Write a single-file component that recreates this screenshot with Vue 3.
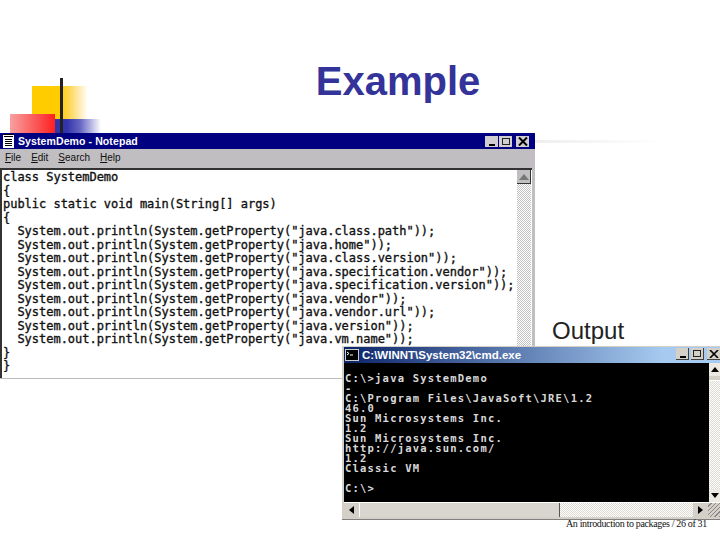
<script setup>
const notepadLines = [
  'class SystemDemo',
  '{',
  'public static void main(String[] args)',
  '{',
  '  System.out.println(System.getProperty("java.class.path"));',
  '  System.out.println(System.getProperty("java.home"));',
  '  System.out.println(System.getProperty("java.class.version"));',
  '  System.out.println(System.getProperty("java.specification.vendor"));',
  '  System.out.println(System.getProperty("java.specification.version"));',
  '  System.out.println(System.getProperty("java.vendor"));',
  '  System.out.println(System.getProperty("java.vendor.url"));',
  '  System.out.println(System.getProperty("java.version"));',
  '  System.out.println(System.getProperty("java.vm.name"));',
  '}',
  '}',
]
const cmdLines = [
  'C:\\>java SystemDemo',
  '-',
  'C:\\Program Files\\JavaSoft\\JRE\\1.2',
  '46.0',
  'Sun Microsystems Inc.',
  '1.2',
  'Sun Microsystems Inc.',
  'http://java.sun.com/',
  '1.2',
  'Classic VM',
  ' ',
  'C:\\>',
]
const menus = [
  { key: 'F', rest: 'ile' },
  { key: 'E', rest: 'dit' },
  { key: 'S', rest: 'earch' },
  { key: 'H', rest: 'elp' },
]
</script>

<template>
  <div class="slide">
    <div class="logo">
      <div class="logo-yellow"></div>
      <div class="logo-blue"></div>
      <div class="logo-red"></div>
      <div class="logo-bar"></div>
    </div>
    <h1 class="title">Example</h1>
    <div class="rule"></div>

    <section class="notepad">
      <header class="np-title">
        <svg class="np-icon" width="13" height="14" viewBox="0 0 13 14">
          <rect x="1" y="1" width="11" height="13" fill="#fff" />
          <path d="M2 0.5h9M2 2.5h9" stroke="#000" />
          <path d="M3 5.5h7M3 7.5h7M3 9.5h7M3 11.5h7" stroke="#000" />
        </svg>
        <span class="np-caption">SystemDemo - Notepad</span>
        <div class="ctrls">
          <button class="ctrl"><i class="g-min"></i></button>
          <button class="ctrl"><i class="g-max"></i></button>
          <button class="ctrl ctrl-close">
            <svg width="10" height="9" viewBox="0 0 10 9"><path d="M1 0.5l8 8M9 0.5l-8 8" stroke="#000" stroke-width="2" /></svg>
          </button>
        </div>
      </header>
      <nav class="np-menu">
        <span v-for="m in menus" :key="m.key"><u>{{ m.key }}</u>{{ m.rest }}</span>
      </nav>
      <div class="np-client">
        <pre class="np-text"><template v-for="(l, i) in notepadLines" :key="i">{{ l }}
</template></pre>
        <div class="np-scroll">
          <div class="np-up"><svg width="10" height="6" viewBox="0 0 10 6"><path d="M5 0l5 6H0z" fill="#777" /></svg></div>
        </div>
      </div>
    </section>

    <div class="output">Output</div>

    <section class="cmd">
      <header class="cmd-title">
        <svg class="cmd-icon" width="14" height="12" viewBox="0 0 14 12">
          <rect x="0.5" y="0.5" width="13" height="11" fill="#000" stroke="#ccc" />
          <path d="M2 3l2 1.5L2 6M5 6h3" stroke="#fff" fill="none" />
        </svg>
        <span class="cmd-caption">C:\WINNT\System32\cmd.exe</span>
        <div class="cmd-ctrls">
          <button class="xctrl"><i class="g-min"></i></button>
          <button class="xctrl"><i class="g-max"></i></button>
          <button class="xctrl xctrl-close">
            <svg width="10" height="8" viewBox="0 0 10 8"><path d="M1 0l8 8M9 0L1 8" stroke="#000" stroke-width="1.6" /></svg>
          </button>
        </div>
      </header>
      <div class="cmd-main">
        <pre class="cmd-text"><template v-for="(l, i) in cmdLines" :key="i">{{ l }}
</template></pre>
        <div class="cmd-vscroll">
          <div class="x-btn"><svg width="8" height="5" viewBox="0 0 8 5"><path d="M4 0l4 5H0z" /></svg></div>
          <div class="x-vthumb"></div>
          <div class="cmd-vtrack"></div>
          <div class="x-btn"><svg width="8" height="5" viewBox="0 0 8 5"><path d="M4 5l4-5H0z" /></svg></div>
        </div>
      </div>
      <div class="cmd-hscroll">
        <div class="x-hbtn"><svg width="5" height="8" viewBox="0 0 5 8"><path d="M0 4l5-4v8z" /></svg></div>
        <div class="x-thumb"></div>
        <div class="x-track"></div>
        <div class="x-hbtn"><svg width="5" height="8" viewBox="0 0 5 8"><path d="M5 4L0 0v8z" /></svg></div>
        <div class="x-grip"></div>
      </div>
    </section>

    <footer class="footer">An introduction to packages / 26 of 31</footer>
  </div>
</template>

<style>
html, body { margin: 0; background: #fff; }
</style>

<style scoped>
.slide {
  position: relative;
  width: 720px;
  height: 540px;
  overflow: hidden;
  background: #fff;
}
.logo { position: absolute; left: 0; top: 70px; width: 110px; height: 63px; }
.logo div { position: absolute; }
.logo-yellow {
  left: 32px; top: 16px; width: 56px; height: 47px;
  background: linear-gradient(90deg, #ffcc00 0 50%, #ffd75c 68%, #fff 100%);
}
.logo-blue {
  left: 55px; top: 49px; width: 46px; height: 14px;
  background: linear-gradient(90deg, #3333aa 0 25%, #6666c4 55%, #fff 100%);
}
.logo-red {
  left: 10px; top: 44px; width: 45px; height: 19px;
  background: linear-gradient(90deg, #f7a0a0, #ff2020);
}
.logo-bar { left: 60px; top: 8px; width: 3px; height: 55px; background: #222; }

.title {
  position: absolute;
  left: 298px; top: 57px;
  width: 200px;
  margin: 0;
  text-align: center;
  font: bold 40px/48px "Liberation Sans", Arial, sans-serif;
  color: #333399;
}
.rule {
  position: absolute;
  left: 535px; top: 140px;
  width: 130px; height: 3px;
  background: linear-gradient(90deg, #eeeeee, #fff);
}

.notepad {
  position: absolute;
  left: 0; top: 133px;
  width: 535px; height: 245px;
  background: #c0bec0;
  display: flex;
  flex-direction: column;
  box-shadow: 0 1px 0 #bbb;
}
.np-title {
  height: 16px;
  background: #000080;
  color: #fff;
  display: flex;
  align-items: center;
  padding-left: 2px;
  flex: none;
}
.np-icon { flex: none; }
.np-caption {
  margin-left: 3px;
  font: bold 10.5px/16px "Liberation Sans", sans-serif;
  letter-spacing: 0.1px;
}
.ctrls {
  margin-left: auto;
  margin-right: 6px;
  display: flex;
  gap: 1px;
}
.ctrl {
  width: 13px; height: 11px;
  padding: 0; border: 0;
  background: #d0ced0;
  display: flex; align-items: center; justify-content: center;
  position: relative;
}
.ctrl-close { margin-left: 3px; }
.g-min {
  position: absolute; left: 4px; bottom: 1px;
  width: 6px; height: 2px; background: #000;
}
.g-max {
  width: 8px; height: 7px;
  border: 1px solid #222;
  box-sizing: border-box;
  display: block;
}
.np-menu {
  height: 18px;
  flex: none;
  display: flex;
  gap: 10px;
  padding-left: 5px;
  font: 10px/18px "Liberation Sans", sans-serif;
  color: #111;
}
.np-menu u { text-decoration: underline; }
.np-client {
  flex: 1;
  min-height: 0;
  margin: 1px 3px 0 0;
  background: #fff;
  border-top: 2px solid #333;
  border-left: 2px solid #333;
  display: flex;
  justify-content: space-between;
}
.np-text {
  margin: 1px 0 0 1px;
  font: 12px/13.5px "DejaVu Sans Mono", monospace;
  letter-spacing: -0.02px;
  -webkit-text-stroke: 0.35px #111;
  color: #111;
}
.np-scroll {
  width: 14px;
  margin-right: 1px;
  background: repeating-conic-gradient(#c4c4c4 0 25%, #fff 0 50%) 0 0 / 2px 2px;
}
.np-up {
  height: 14px;
  background: #c0bec0;
  border-right: 1px solid #333;
  border-bottom: 1px solid #333;
  box-sizing: border-box;
  display: flex; align-items: center; justify-content: center;
}

.output {
  position: absolute;
  left: 552px; top: 316px;
  font: 24px/30px "Liberation Sans", Arial, sans-serif;
  color: #222;
}

.cmd {
  position: absolute;
  left: 342px; top: 346px;
  width: 378px; height: 174px;
  background: #d4d0c8;
  box-sizing: border-box;
  padding: 1px 0 2px 2px;
  display: flex;
  flex-direction: column;
  border-bottom: 1px solid #808080;
}
.cmd-title {
  height: 16px;
  flex: none;
  background: linear-gradient(90deg, #0a246a 0, #a6caf0 85%);
  display: flex;
  align-items: center;
  padding-left: 1px;
  color: #fff;
}
.cmd-icon { flex: none; }
.cmd-caption {
  margin-left: 3px;
  font: bold 11.5px/16px "Liberation Sans", sans-serif;
}
.cmd-ctrls {
  margin-left: auto;
  display: flex;
  gap: 2px;
  margin-top: -2px;
}
.xctrl {
  width: 13px; height: 12px;
  padding: 0; border: 0;
  background: #d4d0c8;
  position: relative;
  display: flex; align-items: center; justify-content: center;
  border-right: 1px solid #404040;
  border-bottom: 1px solid #404040;
  box-sizing: border-box;
}
.xctrl-close { margin-left: 1px; border-right: 0; }
.cmd-main {
  flex: 1;
  min-height: 0;
  display: flex;
  background: #000;
}
.cmd-text {
  flex: 1;
  margin: 0;
  padding: 10px 0 0 1px;
  font: bold 10.5px/10px "DejaVu Sans Mono", monospace;
  letter-spacing: 1.2px;
  color: #d8d8d8;
  overflow: hidden;
}
.cmd-vscroll {
  width: 11px;
  display: flex;
  flex-direction: column;
  background: #f0eee8;
}
.x-vthumb {
  height: 5px;
  background: #d4d0c8;
  border-bottom: 1px solid #fff;
  box-sizing: border-box;
}
.cmd-vtrack {
  flex: 1;
  background: repeating-conic-gradient(#dcd9d2 0 25%, #fff 0 50%) 0 0 / 2px 2px;
}
.x-btn {
  height: 13px;
  background: #ece9e2;
  display: flex; align-items: center; justify-content: center;
}
.cmd-hscroll {
  height: 14px;
  flex: none;
  display: flex;
  background: #d4d0c8;
  border-top: 1px solid #fff;
}
.x-hbtn {
  width: 15px;
  display: flex; align-items: center; justify-content: center;
  flex: none;
}
.x-thumb {
  width: 201px;
  flex: none;
  background: #d8d6ce;
  border-left: 1px solid #fff;
  border-right: 1px solid #555;
  box-sizing: border-box;
}
.x-track {
  flex: 1;
  background: repeating-conic-gradient(#dcd9d2 0 25%, #fff 0 50%) 0 0 / 2px 2px;
}
.x-grip {
  width: 12px;
  flex: none;
  background: repeating-linear-gradient(135deg, #d4d0c8 0 2px, #888 2px 3px);
}

.footer {
  position: absolute;
  left: 566px; top: 518px;
  font: 10px/12px "Liberation Serif", serif;
  letter-spacing: -0.35px;
  color: #111;
  white-space: nowrap;
}
</style>
